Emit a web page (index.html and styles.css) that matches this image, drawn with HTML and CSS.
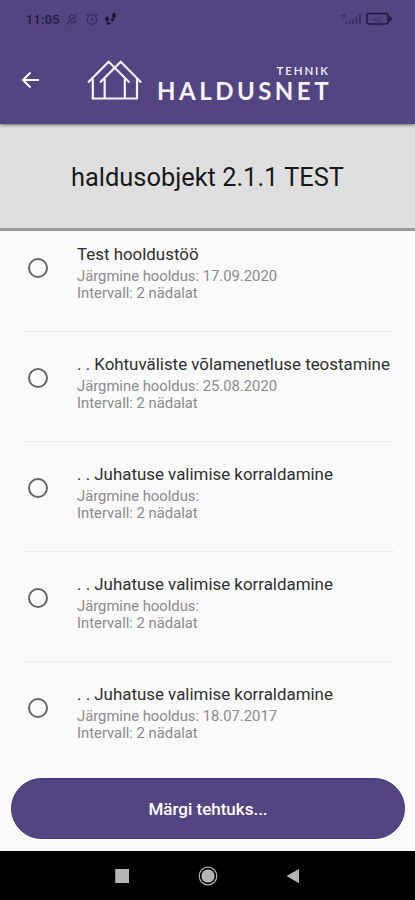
FILE: index.html
```html
<!DOCTYPE html>
<html lang="et">
<head>
<meta charset="utf-8">
<meta name="viewport" content="width=device-width">
<title>Haldusnet Tehnik</title>
<link rel="stylesheet" href="styles.css">
</head>
<body>
<header class="header">
  <div class="status">
    <div class="status-left">
      <span class="clock">11:05</span>
      <svg width="14" height="14" viewBox="0 0 14 14" class="dim"><path d="M3 10.5h8L9.8 8.7V5.5Q9.5 3 7 2.7Q4.6 3 4.3 5.5v3.2zM6 12h2M1.5 12.5l11-11"/></svg>
      <svg width="14" height="14" viewBox="0 0 14 14" class="dim"><circle cx="7" cy="7.5" r="4.7"/><path d="M7 5v3l2 1M1 3.5 3.5 1.5M10.5 1.5 13 3.5"/></svg>
      <svg width="13" height="14" viewBox="0 0 13 14"><g fill="#171032"><ellipse cx="3" cy="7" rx="1.7" ry="2.6"/><ellipse cx="4.5" cy="11.3" rx="1.6" ry="1.5"/><ellipse cx="10" cy="3.5" rx="1.7" ry="2.8"/><ellipse cx="8.5" cy="7.8" rx="1.6" ry="1.6"/></g></svg>
    </div>
    <div class="status-right">
      <svg width="23" height="14" viewBox="0 0 23 14"><g fill="none" stroke="#3a2d65" stroke-width="2"><path d="M6 12v-2M9.5 12V9M13 12V7.5M16.5 12V5M20 12V2"/><path d="M1 4.5Q3.5 1.5 6 4.5M3.5 5v2" stroke-width="1.3"/></g></svg>
      <svg width="28" height="14" viewBox="0 0 28 14"><rect x="2" y="1.5" width="21" height="10.5" rx="2" fill="none" stroke="#211741" stroke-width="1.5"/><path d="M24 3.5 27.5 6.8 24 10z" fill="#211741"/><text x="12.5" y="9.6" class="battery-text">82</text></svg>
    </div>
  </div>
  <div class="bar">
    <svg class="back" width="20" height="18" viewBox="0 0 20 18"><path d="M18 9H2M9.5 1.5 2 9l7.5 7.5"/></svg>
    <svg class="logo" width="55" height="42" viewBox="87 59 55 42"><path d="M88 82.5 108.7 61.8 129.5 82.5M100 82.5 120.7 61.8 141.2 82.5M92.8 79v19.5H137V79M104.7 79v19M124.8 79v19"/></svg>
    <div class="brand">
      <span class="brand-sub">TEHNIK</span>
      <span class="brand-name">HALDUSNET</span>
    </div>
  </div>
</header>
<h1 class="object"><span>haldusobjekt 2.1.1 TEST</span></h1>
<main class="list">
  <div class="item"><i class="radio"></i><div><div class="name">Test hooldustöö</div><div class="sub">Järgmine hooldus: 17.09.2020</div><div class="sub">Intervall: 2 nädalat</div></div></div>
  <div class="item"><i class="radio"></i><div><div class="name">. . Kohtuväliste võlamenetluse teostamine</div><div class="sub">Järgmine hooldus: 25.08.2020</div><div class="sub">Intervall: 2 nädalat</div></div></div>
  <div class="item"><i class="radio"></i><div><div class="name">. . Juhatuse valimise korraldamine</div><div class="sub">Järgmine hooldus:</div><div class="sub">Intervall: 2 nädalat</div></div></div>
  <div class="item"><i class="radio"></i><div><div class="name">. . Juhatuse valimise korraldamine</div><div class="sub">Järgmine hooldus:</div><div class="sub">Intervall: 2 nädalat</div></div></div>
  <div class="item"><i class="radio"></i><div><div class="name">. . Juhatuse valimise korraldamine</div><div class="sub">Järgmine hooldus: 18.07.2017</div><div class="sub">Intervall: 2 nädalat</div></div></div>
</main>
<button class="done">Märgi tehtuks...</button>
<nav class="nav">
  <svg width="20" height="20" viewBox="0 0 20 20"><path d="M3.2 3H17v14H3.2z"/></svg>
  <svg width="20" height="20" viewBox="0 0 20 20"><circle cx="10" cy="10" r="6.6"/><circle cx="10" cy="10" r="8.8" class="ring"/></svg>
  <svg width="20" height="20" viewBox="0 0 20 20"><path d="M16 3v14.2L3.5 10z"/></svg>
</nav>
</body>
</html>
```
FILE: styles.css
```css
* { box-sizing: border-box; }
body {
  margin: 0;
  width: 415px;
  height: 900px;
  overflow: hidden;
  display: flex;
  flex-direction: column;
  background: #fafafa;
  font-family: Roboto, "Liberation Sans", sans-serif;
}
.header {
  flex: none;
  height: 124px;
  background: #524582;
  box-shadow: 0 1px 3px rgba(0, 0, 0, .55);
  z-index: 1;
}
.status {
  height: 38px;
  padding: 0 22px 0 26px;
  display: flex;
  align-items: center;
  justify-content: space-between;
}
.status-left, .status-right { display: flex; align-items: center; }
.status-left { gap: 5.5px; }
.clock { font-size: 12.5px; font-weight: 500; letter-spacing: .4px; color: #211741; }
.dim { fill: none; stroke: #3a2d65; stroke-width: 1.2; }
.status-right { gap: 2px; }
.battery-text { font-size: 8px; text-anchor: middle; fill: #3a2d65; }
.bar { height: 86px; display: flex; align-items: flex-start; }
.back { margin: 33px 0 0 21px; fill: none; stroke: #fff; stroke-width: 2; }
.logo { margin: 21px 0 0 46px; fill: none; stroke: #f4f1fa; stroke-width: 2.2; }
.brand {
  margin: 26px 0 0 15px;
  width: 174px;
  display: flex;
  flex-direction: column;
  font-family: Lato, sans-serif;
  color: #f6f3fc;
  white-space: nowrap;
}
.brand-sub { align-self: flex-end; margin-right: 1px; font-size: 11.5px; line-height: 14px; letter-spacing: 1.9px; font-weight: 600; }
.brand-name { margin-top: 1px; font-size: 24px; line-height: 24px; font-weight: 700; letter-spacing: 3.5px; }
.object {
  flex: none;
  margin: 0;
  height: 107px;
  padding-top: 2px;
  border-bottom: 3px solid #9c9c9c;
  background: #dfdfdf;
  color: #191919;
  display: flex;
  align-items: center;
  justify-content: center;
  font-size: 25.4px;
  font-weight: 400;
}
.list { flex: none; height: 546px; padding: 0 20px 0 23px; margin-top: -9px; }
.item {
  height: 110px;
  padding: 20px 0 0 5px;
  display: flex;
  border-bottom: 1px solid #ededed;
  white-space: nowrap;
}
.item:last-child { border-bottom: 0; }
.radio {
  flex: none;
  width: 20px;
  height: 20px;
  margin: 16px 29px 0 0;
  border: 2px solid #666;
  border-radius: 50%;
}
.name { font-size: 16.9px; line-height: 24px; color: #303030; }
.sub { font-size: 14.8px; line-height: 17px; color: #8b8b8b; }
.name + .sub { margin-top: 2px; }
.done {
  flex: none;
  height: 61px;
  margin: 10px 10px 0 11px;
  border: 1px solid #44377a;
  border-radius: 31px;
  background: #524582;
  color: #fff;
  font: 500 17px Roboto, sans-serif;
}
.nav {
  flex: none;
  height: 49px;
  margin-top: 12px;
  background: #000;
  display: flex;
  justify-content: center;
  align-items: center;
  gap: 65.5px;
  fill: #b5b5b5;
}
.ring { fill: none; stroke: #b5b5b5; stroke-width: 1.2; }
```
